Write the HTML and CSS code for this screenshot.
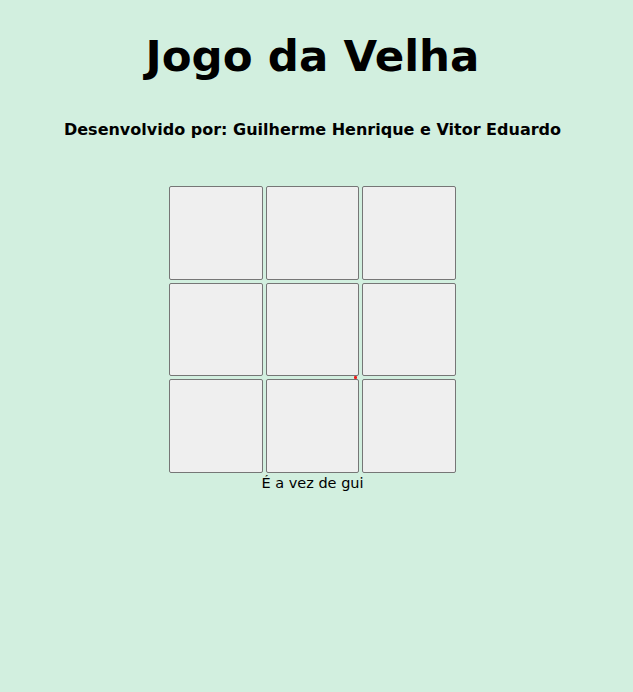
FILE: index.html
```html
<!DOCTYPE html>
<html lang="pt">
<head>
<meta charset="utf-8">
<title>Jogo da Velha</title>
<link rel="stylesheet" href="styles.css">
</head>
<body>
<main class="page">
  <h1 class="title">Jogo da Velha</h1>
  <h2 class="subtitle">Desenvolvido por: Guilherme Henrique e Vitor Eduardo</h2>
  <div class="board">
    <button class="cell"></button>
    <button class="cell"></button>
    <button class="cell"></button>
    <button class="cell"></button>
    <button class="cell"></button>
    <button class="cell"></button>
    <button class="cell"></button>
    <button class="cell"></button>
    <button class="cell"></button>
    <span class="marker"></span>
  </div>
  <p class="status">É a vez de gui</p>
</main>
</body>
</html>
```
FILE: styles.css
```css
html, body {
  margin: 0;
  padding: 0;
  background: #d2efdf;
  height: 100%;
}
.page {
  display: flex;
  flex-direction: column;
  align-items: center;
  padding-right: 8px;
  font-family: "DejaVu Sans", sans-serif;
  color: #000;
}
.title {
  margin: 26px 0 0;
  font-size: 43.5px;
  font-weight: bold;
  line-height: 60px;
}
.subtitle {
  margin: 32px 0 0;
  font-size: 16px;
  font-weight: bold;
  line-height: 24px;
}
.board {
  position: relative;
  margin-top: 44px;
  display: grid;
  grid-template-columns: repeat(3, 93.5px);
  grid-auto-rows: 93.5px;
  gap: 3px;
}
.cell {
  margin: 0;
  padding: 0;
  background: #efefef;
  border: 1px solid #767676;
  border-radius: 2px;
}
.marker {
  position: absolute;
  left: 185px;
  top: 190px;
  width: 3px;
  height: 3px;
  border-radius: 1px;
  background: #f01c1c;
}
.status {
  margin: 1px 0 0;
  font-size: 14.5px;
  line-height: 18px;
}
```
